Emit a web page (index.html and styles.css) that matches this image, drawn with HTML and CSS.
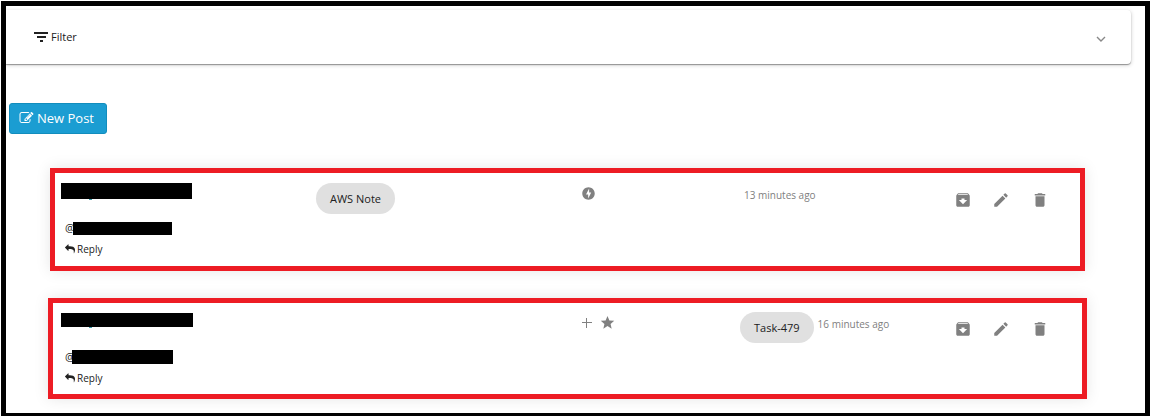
FILE: index.html
```
<!DOCTYPE html>
<html lang="en">
<head>
<meta charset="utf-8">
<title>Posts</title>
<link rel="stylesheet" href="styles.css">
</head>
<body>
<svg class="sprite" aria-hidden="true">
  <symbol id="archive" viewBox="0 0 24 24"><path d="M20.54 5.23l-1.39-1.68C18.88 3.21 18.47 3 18 3H6c-.47 0-.88.21-1.16.55L3.46 5.23C3.17 5.57 3 6.02 3 6.5V19c0 1.1.9 2 2 2h14c1.100 0 2-.9 2-2V6.500c0-.48-.17-.93-.46-1.270zM12 17.500L6.500 12H10v-2h4v2h3.500L12 17.500zM5.120 5l.81-1h12l.94 1H5.120z"/></symbol>
  <symbol id="edit" viewBox="0 0 24 24"><path d="M3 17.250V21h3.750L17.810 9.940l-3.750-3.750L3 17.250zM20.710 7.040a1 1 0 0 0 0-1.410l-2.340-2.340a1 1 0 0 0-1.410 0l-1.830 1.830 3.750 3.750 1.830-1.830z"/></symbol>
  <symbol id="trash" viewBox="0 0 24 24"><path d="M6 19c0 1.100.9 2 2 2h8c1.100 0 2-.9 2-2V7H6v12zM19 4h-3.500l-1-1h-5l-1 1H5v2h14V4z"/></symbol>
  <symbol id="reply" viewBox="0 0 1792 1792"><path d="M1792 1120q0 166-127 451-3 7-10.500 24t-13.500 30-13 22q-12 17-28 17-15 0-23.500-10t-8.500-25q0-9 2.500-26.500t2.500-23.500q5-68 5-123 0-101-17.500-181t-48.500-138.500-80-101-105.500-69.500-133-42.500-154-21.500-175.500-6H640v256q0 26-19 45t-45 19-45-19L19 685Q0 666 0 640t19-45L531 83q19-19 45-19t45 19 19 45v256h224q713 0 875 403 53 134 53 333z"/></symbol>
</svg>
<main class="frame">
  <button class="filter" type="button" aria-expanded="false">
    <svg class="filter-icon" viewBox="0 0 14 10" aria-hidden="true"><path d="M0 0h14v2H0zM3 4h9v2H3zM6 8h3v2H6z"/></svg>
    <span>Filter</span>
    <svg class="chevron" viewBox="0 0 10 6" aria-hidden="true"><path d="M1 1l4 4 4-4"/></svg>
  </button>

  <button class="new-post" type="button">
    <svg class="new-icon" viewBox="0 0 1792 1792" aria-hidden="true"><path d="M888 1184l116-116-152-152-116 116v56h96v96h56zm440-720q-16-16-33 1L945 815q-17 17-1 33t33-1l350-350q17-17 1-33zm80 594v190q0 119-84.500 203.500T1120 1536H288q-119 0-203.500-84.500T0 1248V416q0-119 84.500-203.500T288 128h832q63 0 117 25 15 7 18 23 3 17-9 29l-49 49q-14 14-32 8-23-6-45-6H288q-66 0-113 47t-47 113v832q0 66 47 113t113 47h832q66 0 113-47t47-113v-126q0-13 9-22l64-64q15-15 35-7t20 29zm-96-738l288 288-672 672H640V1024zm444 132l-92 92-288-288 92-92q28-28 68-28t68 28l152 152q28 28 28 68t-28 68z"/></svg>
    <span>New Post</span>
  </button>

  <section class="posts">
    <article class="post">
      <div class="summary">
        <div><span class="redacted name"></span></div>
        <div><span class="chip">AWS Note</span></div>
        <div class="flags">
          <svg class="flag bolt" viewBox="0 0 24 24" role="img" aria-label="Quick"><path d="M12 2.020C6.490 2.020 2.020 6.490 2.020 12S6.490 21.980 12 21.980 21.980 17.510 21.980 12 17.510 2.020 12 2.020zM11.480 20v-6.260H8L13 4v6.260h3.350L11.480 20z"/></svg>
        </div>
        <div class="meta"><time>13 minutes ago</time></div>
        <div class="actions">
          <button type="button" aria-label="Archive"><svg><use href="#archive"/></svg></button>
          <button type="button" aria-label="Edit"><svg><use href="#edit"/></svg></button>
          <button type="button" aria-label="Delete"><svg><use href="#trash"/></svg></button>
        </div>
      </div>
      <p class="mention">@<span class="redacted handle"></span></p>
      <a class="reply" href="#"><svg aria-hidden="true"><use href="#reply"/></svg>Reply</a>
    </article>

    <article class="post wide">
      <div class="summary">
        <div><span class="redacted name"></span></div>
        <div></div>
        <div class="flags">
          <svg class="flag plus" viewBox="0 0 12 12" role="img" aria-label="Add"><path d="M5 1h1v4h5v1H6v5H5V6H1V5h4z"/></svg>
          <svg class="flag star" viewBox="0 0 24 24" role="img" aria-label="Starred"><path d="M12 17.770L18.680 22l-1.770-7.600L22.800 9.290l-7.770-.66L12 1.460 8.970 8.630l-7.770.66 5.890 5.110L5.320 22z"/></svg>
        </div>
        <div class="meta"><span class="chip">Task-479</span><time>16 minutes ago</time></div>
        <div class="actions">
          <button type="button" aria-label="Archive"><svg><use href="#archive"/></svg></button>
          <button type="button" aria-label="Edit"><svg><use href="#edit"/></svg></button>
          <button type="button" aria-label="Delete"><svg><use href="#trash"/></svg></button>
        </div>
      </div>
      <p class="mention">@<span class="redacted handle"></span></p>
      <a class="reply" href="#"><svg aria-hidden="true"><use href="#reply"/></svg>Reply</a>
    </article>
  </section>
</main>
</body>
</html>
```
FILE: styles.css
```
* { box-sizing: border-box; }
body {
  margin: 0;
  padding: 1px 0 0 1px;
  background: #fff;
  color: #212121;
  font: 11px/16px "Open Sans", "Noto Sans", sans-serif;
}
button { font: inherit; cursor: pointer; }
.sprite { display: none; }
.frame {
  display: flex;
  flex-direction: column;
  align-items: flex-start;
  border: 5px solid #000;
  border-bottom-width: 3px;
  padding-top: 4px;
}
.filter {
  display: flex;
  align-items: center;
  align-self: stretch;
  gap: 3px;
  height: 54px;
  margin-right: 14px;
  padding: 0 25px 0 28px;
  border: 0;
  border-radius: 0 4px 4px 0;
  background: #fff;
  color: #212121;
  box-shadow: 0 1px 1px rgba(0, 0, 0, .35), 0 1px 4px rgba(0, 0, 0, .2);
}
.filter-icon { width: 14px; height: 10px; fill: #212121; }
.chevron {
  width: 10px;
  height: 6px;
  margin: 4px 0 0 auto;
  fill: none;
  stroke: #888;
  stroke-width: 1.4;
}
.new-post {
  display: flex;
  align-items: center;
  gap: 3px;
  height: 31px;
  margin: 39px 0 0 3px;
  padding: 0 12px 1px 9px;
  border: 1px solid #128dbd;
  border-radius: 3px;
  background: #1b9dd2;
  color: #fff;
  font-size: 13px;
}
.new-icon { width: 15px; height: 14px; fill: #fff; }
.posts {
  display: flex;
  flex-direction: column;
  align-self: stretch;
  gap: 27px;
  padding: 34px 60px 14px 44px;
}
.post {
  padding: 10px 21px 9px 6px;
  border: 5px solid #ed1c24;
  background: #fff;
  box-shadow: 0 0 14px rgba(0, 0, 0, .1);
}
.post.wide {
  margin: 0 -2px;
  padding: 9px 23px 8px 8px;
}
.summary {
  display: grid;
  grid-template-columns: 255fr 265fr 159fr 204fr 115px;
  min-height: 31px;
}
.redacted { display: block; background: #000; }
.name { position: relative; width: 131px; height: 16px; }
.name::after {
  content: "";
  position: absolute;
  top: 100%;
  left: 28px;
  width: 3px;
  height: 1px;
  background: #3c9cab;
}
.wide .name { width: 132px; height: 14px; margin-top: 1px; }
.chip {
  display: inline-block;
  padding: 8px 14px 7px;
  border-radius: 16px;
  background: #e0e0e0;
}
.flags {
  display: flex;
  align-items: center;
  align-self: start;
  gap: 7px;
  height: 21px;
}
.flag { width: 15px; height: 15px; fill: #808080; }
.flag.plus { width: 12px; height: 12px; }
.meta {
  display: flex;
  align-items: flex-start;
  white-space: nowrap;
}
.meta time {
  margin: 4px 0 0 4px;
  color: #808080;
  font-size: 10px;
}
.actions { display: flex; height: 34px; margin-bottom: -3px; }
.actions button {
  flex: 1;
  display: flex;
  align-items: center;
  justify-content: center;
  padding: 0;
  border: 0;
  background: none;
}
.actions svg { width: 18px; height: 18px; fill: #808080; }
.mention {
  display: flex;
  align-items: center;
  height: 16px;
  margin: 6px 0 5px 4px;
}
.handle { flex: none; width: 99px; height: 13px; margin-left: -2px; }
.wide .handle { width: 101px; height: 14px; margin-left: -3px; }
.reply {
  display: flex;
  align-items: center;
  gap: 2px;
  width: max-content;
  margin-left: 4px;
  color: #212121;
  font-size: 10px;
  text-decoration: none;
}
.reply svg { width: 10px; height: 10px; fill: #212121; }
```
